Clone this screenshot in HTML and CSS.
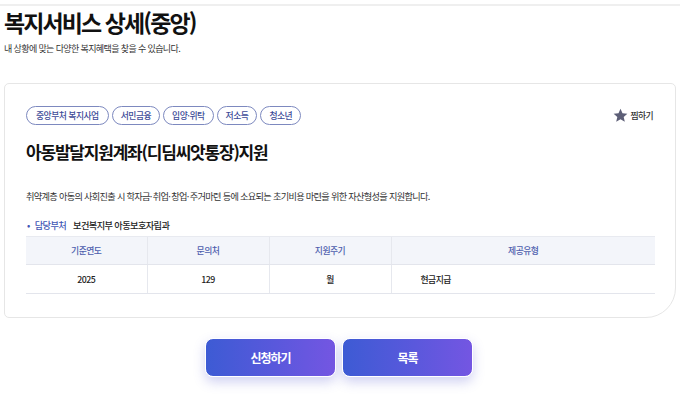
FILE: index.html
```html
<!DOCTYPE html>
<html lang="ko">
<head>
<meta charset="utf-8">
<link rel="stylesheet" href="styles.css">
</head>
<body>
<div class="topline"></div>
<header class="page-head">
  <h1 class="page-title">복지서비스 상세(중앙)</h1>
  <p class="page-sub">내 상황에 맞는 다양한 복지혜택을 찾을 수 있습니다.</p>
</header>
<section class="card">
  <div class="card-top">
    <ul class="tags">
      <li class="tag">중앙부처 복지사업</li>
      <li class="tag">서민금융</li>
      <li class="tag">입양·위탁</li>
      <li class="tag">저소득</li>
      <li class="tag">청소년</li>
    </ul>
    <button class="fav" type="button">
      <svg class="star" viewBox="0 0 24 24" width="15" height="15"><path d="M12 1.2l3.2 7.2 7.8.7-5.9 5.1 1.8 7.7L12 17.8l-6.9 4.1 1.8-7.7L1 9.1l7.8-.7z" fill="#5d5f77"/></svg>
      <span>찜하기</span>
    </button>
  </div>
  <h2 class="svc-title">아동발달지원계좌(디딤씨앗통장)지원</h2>
  <p class="svc-desc">취약계층 아동의 사회진출 시 학자금·&#8201;취업·&#8201;창업·&#8201;주거마련 등에 소요되는 초기비용 마련을 위한 자산형성을 지원합니다.</p>
  <p class="dept"><span class="dept-label"><span class="dot">•</span>담당부처</span><span class="dept-name">보건복지부 아동보호자립과</span></p>
  <table class="info">
    <thead>
      <tr><th class="c1">기준연도</th><th class="c2">문의처</th><th class="c3">지원주기</th><th class="c4">제공유형</th></tr>
    </thead>
    <tbody>
      <tr><td>2025</td><td>129</td><td>월</td><td class="left">현금지급</td></tr>
    </tbody>
  </table>
</section>
<div class="actions">
  <button class="btn" type="button">신청하기</button>
  <button class="btn" type="button">목록</button>
</div>
</body>
</html>
```

FILE: styles.css
```css
* { box-sizing: border-box; }
html, body { margin: 0; padding: 0; background: #fff; }
body {
  font-family: "Noto Sans CJK KR", "Noto Sans", sans-serif;
  color: #222;
  width: 680px;
  height: 400px;
  overflow: hidden;
}
.topline {
  margin-top: 4px;
  height: 2px;
  background: #efefef;
}
.page-head { padding: 0 4px; }
.page-title {
  margin: 1px 0 0;
  font-size: 23px;
  line-height: 30px;
  font-weight: 700;
  letter-spacing: -1.9px;
  color: #111;
}
.page-sub {
  margin: 6px 0 0;
  font-size: 9px;
  line-height: 12px;
  letter-spacing: -0.62px;
  color: #333;
}
.card {
  margin: 28px 4px 0;
  height: 235px;
  border: 1px solid #e6e6e6;
  border-radius: 5px 5px 30px 5px;
  padding: 22px 21px 0;
}
.card-top {
  display: flex;
  justify-content: space-between;
  align-items: center;
}
.tags {
  display: flex;
  gap: 3px;
  list-style: none;
  margin: 0;
  padding: 0;
}
.tag {
  height: 19px;
  padding: 0 8px;
  border: 1px solid #7d89bf;
  border-radius: 10px;
  font-size: 8.8px;
  font-weight: 500;
  line-height: 17px;
  letter-spacing: -0.5px;
  color: #3d4b98;
}
.tag:first-child { padding: 0 9px; }
.fav {
  display: flex;
  align-items: center;
  gap: 3px;
  margin-right: 1px;
  padding: 0;
  border: 0;
  background: none;
  font-family: inherit;
  font-size: 8.8px;
  font-weight: 500;
  letter-spacing: -0.6px;
  color: #333;
}
.star { display: block; }
.svc-title {
  margin: 15px 0 0;
  font-size: 17px;
  line-height: 24px;
  font-weight: 700;
  letter-spacing: -1.2px;
  color: #111;
}
.svc-desc {
  margin: 25px 0 0;
  font-size: 9.2px;
  line-height: 14px;
  letter-spacing: -0.7px;
  color: #333;
}
.dept {
  margin: 15px 0 0;
  font-size: 9.2px;
  line-height: 14px;
  letter-spacing: -0.6px;
}
.dot { margin: 0 5px 0 1px; }
.dept-label { color: #4257b5; font-weight: 500; margin-right: 7px; }
.dept-name { color: #222; font-weight: 500; }
.info {
  margin-top: 4px;
  width: 629px;
  border-collapse: collapse;
  font-size: 8.8px;
  letter-spacing: -0.5px;
}
.info th {
  height: 28px;
  background: #f3f5fa;
  color: #4e5eae;
  font-weight: 500;
  border-top: 1px solid #e8eaf0;
  border-bottom: 1px solid #e3e5ec;
}
.info td {
  height: 29px;
  text-align: center;
  color: #222;
  font-weight: 500;
  border-bottom: 1px solid #e3e5ec;
}
.info th + th, .info td + td { border-left: 1px solid #e6e8ee; }
.info .c1 { width: 121px; }
.info .c2 { width: 122px; }
.info .c3 { width: 122px; }
.info td.left { text-align: left; padding-left: 29px; }
.actions {
  display: flex;
  justify-content: center;
  gap: 6px;
  margin-top: 20px;
  padding-right: 2px;
}
.btn {
  width: 131px;
  height: 39px;
  border: 1.5px solid #fff;
  border-radius: 8px;
  background: linear-gradient(90deg, #3d5bd4 0%, #5a58dc 55%, #7456e2 100%);
  box-shadow: 0 5px 12px rgba(85, 90, 210, 0.28);
  color: #fff;
  font-family: inherit;
  font-size: 12px;
  font-weight: 700;
  letter-spacing: -1px;
}
```
